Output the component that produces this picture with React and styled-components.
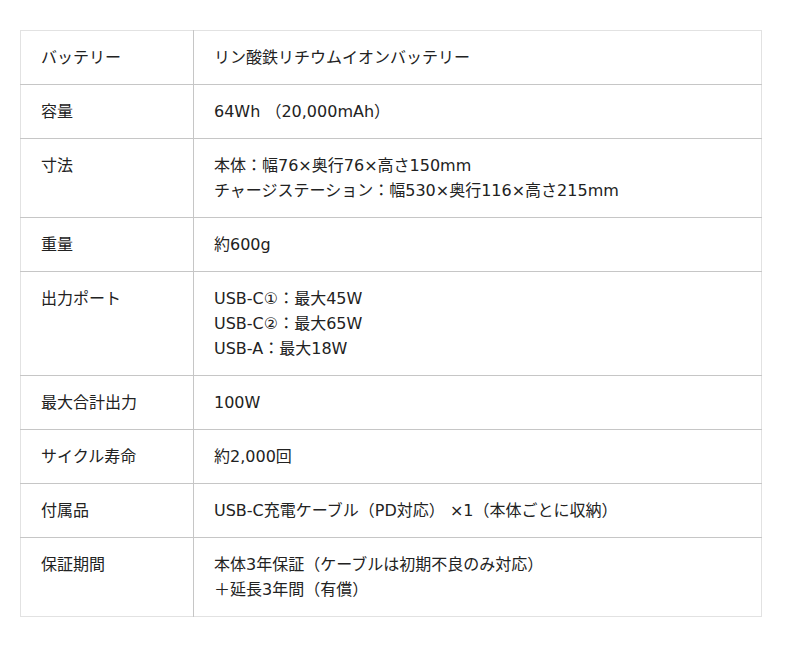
import styled, { createGlobalStyle } from "styled-components"

const GlobalStyle = createGlobalStyle`
    body{
        margin:0;
        background:#fff;
        font-family:"DejaVu Sans","Noto Sans CJK JP",sans-serif;
    }
`
const Page = styled.div`
    padding:30px 38px 30px 20px;
`
const Table = styled.table`
    width:742px;
    border-collapse:collapse;
    border:1px solid #e2e2e2;
    color:#222;
    font-size:16px;
    line-height:25px;
`
const Row = styled.tr`
    border-bottom:1px solid #c6c6c6;
    &:last-child{
        border-bottom:1px solid #e2e2e2;
    }
`
const Head = styled.th`
    width:132px;
    padding:14px 20px;
    text-align:left;
    vertical-align:top;
    font-weight:normal;
    border-right:1px solid #c6c6c6;
`
const Cell = styled.td`
    padding:14px 20px;
    vertical-align:top;
`

const specs = [
    ["バッテリー", ["リン酸鉄リチウムイオンバッテリー"]],
    ["容量", ["64Wh （20,000mAh）"]],
    ["寸法", ["本体：幅76×奥行76×高さ150mm", "チャージステーション：幅530×奥行116×高さ215mm"]],
    ["重量", ["約600g"]],
    ["出力ポート", ["USB-C①：最大45W", "USB-C②：最大65W", "USB-A：最大18W"]],
    ["最大合計出力", ["100W"]],
    ["サイクル寿命", ["約2,000回"]],
    ["付属品", ["USB-C充電ケーブル（PD対応） ×1（本体ごとに収納）"]],
    ["保証期間", ["本体3年保証（ケーブルは初期不良のみ対応）", "＋延長3年間（有償）"]],
]

export default function App()
{
    return(
        <Page>
            <GlobalStyle/>
            <Table>
                <tbody>
                    {specs.map(([label, lines]) => (
                        <Row key={label}>
                            <Head>{label}</Head>
                            <Cell>
                                {lines.map((line, i) => <div key={i}>{line}</div>)}
                            </Cell>
                        </Row>
                    ))}
                </tbody>
            </Table>
        </Page>
    )
}
